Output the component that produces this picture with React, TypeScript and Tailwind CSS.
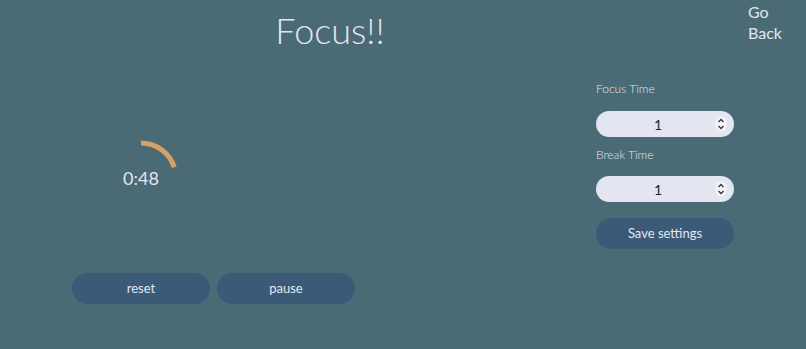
import React from "react";

function Spinner() {
  return (
    <svg width="12" height="16" viewBox="0 0 12 16" className="absolute right-[7px] top-[5px]">
      <rect x="0.5" y="0.5" width="11" height="15" rx="5.5" fill="#f3f4f9" />
      <path d="M3.5 6 L6 3.5 L8.5 6" fill="none" stroke="#333" strokeWidth="1.3" />
      <path d="M3.5 10 L6 12.5 L8.5 10" fill="none" stroke="#333" strokeWidth="1.3" />
    </svg>
  );
}

function NumberBox({ value }: { value: number }) {
  return (
    <div className="relative h-[26px] w-full rounded-full bg-[#e3e5f1] flex items-center justify-center pr-[14px] text-[14px] text-[#1f2530]">
      {value}
      <Spinner />
    </div>
  );
}

export default function App() {
  const progress = 0.2;
  const angle = progress * 2 * Math.PI;
  const endX = 40 + 35 * Math.sin(angle);
  const endY = 40 - 35 * Math.cos(angle);

  return (
    <div
      className="w-full h-[349px] bg-[#4a6a76] text-[#e3e6f0] flex flex-col overflow-hidden"
      style={{ fontFamily: "Lato, 'Open Sans', sans-serif" }}
    >
      {/* header */}
      <div className="flex h-[62px]">
        <h1 className="w-[660px] text-center text-[36px] font-light leading-none pt-[12px]">Focus!!</h1>
        <div className="ml-[88px] text-[16px] leading-[21px] pt-[1px]">
          Go
          <br />
          Back
        </div>
      </div>

      <div className="flex">
        {/* timer side */}
        <div className="ml-[72px] w-[283px] flex flex-col">
          <div className="w-[138px] mt-[76px] flex justify-center">
            <div className="relative w-[80px] h-[80px]">
              <svg width="80" height="80" viewBox="0 0 80 80">
                <path
                  d={`M40 5 A35 35 0 0 1 ${endX.toFixed(1)} ${endY.toFixed(1)}`}
                  fill="none"
                  stroke="#d9a066"
                  strokeWidth="5"
                />
              </svg>
              <div className="absolute inset-0 flex items-center justify-center text-[18px]">0:48</div>
            </div>
          </div>
          <div className="flex gap-[7px] mt-[55px]">
            <button className="w-[138px] h-[31px] rounded-full bg-[#3b5a77] text-[13px] text-[#e3e6f0]">reset</button>
            <button className="w-[138px] h-[31px] rounded-full bg-[#3b5a77] text-[13px] text-[#e3e6f0]">pause</button>
          </div>
        </div>

        {/* settings */}
        <div className="ml-[241px] w-[138px] flex flex-col">
          <label className="mt-[19px] text-[12px] leading-[16px] font-light">Focus Time</label>
          <div className="mt-[14px]">
            <NumberBox value={1} />
          </div>
          <label className="mt-[10px] text-[12px] leading-[16px] font-light">Break Time</label>
          <div className="mt-[13px]">
            <NumberBox value={1} />
          </div>
          <button className="mt-[16px] h-[31px] rounded-full bg-[#3b5a77] text-[13px] text-[#e3e6f0]">
            Save settings
          </button>
        </div>
      </div>
    </div>
  );
}
